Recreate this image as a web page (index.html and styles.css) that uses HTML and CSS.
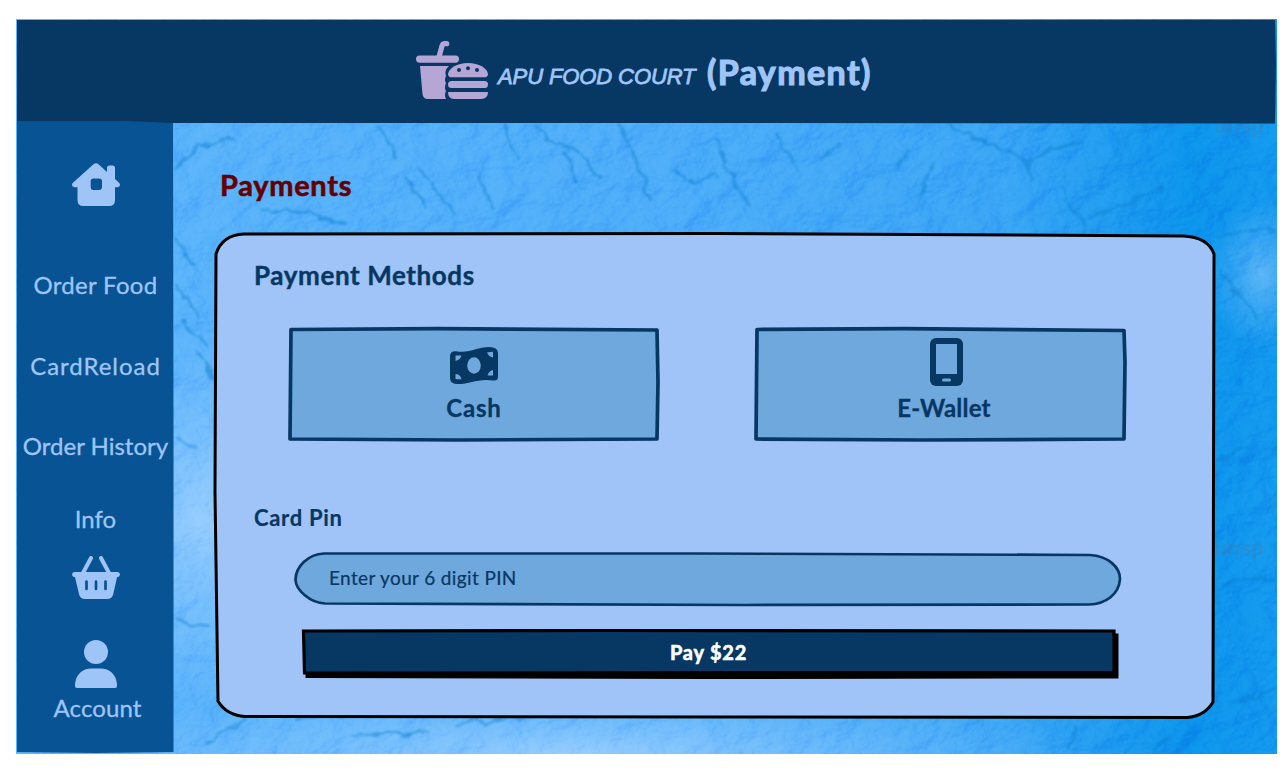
FILE: index.html
```html
<!DOCTYPE html>
<html lang="en">
<head>
<meta charset="utf-8">
<title>APU Food Court - Payment</title>
<link rel="stylesheet" href="styles.css">
</head>
<body>
<div class="app">
  <svg class="texture" viewBox="0 0 1261 735" aria-hidden="true">
    <defs>
      <linearGradient id="wash" x1="0" y1="0" x2="1" y2="0">
        <stop offset="0" stop-color="#5cb4fb"/><stop offset=".5" stop-color="#4bacf9"/>
        <stop offset=".78" stop-color="#38a4f5"/><stop offset=".93" stop-color="#0b93ec"/><stop offset="1" stop-color="#1297ee"/>
      </linearGradient>
      <radialGradient id="pale"><stop offset="0" stop-color="#a4d2ff" stop-opacity=".8"/><stop offset="1" stop-color="#8ac7ff" stop-opacity="0"/></radialGradient>
      <filter id="paper" x="0" y="0" width="100%" height="100%" color-interpolation-filters="sRGB">
        <feTurbulence type="fractalNoise" baseFrequency=".025 .03" numOctaves="6" seed="12" result="n"/>
        <feDiffuseLighting in="n" surfaceScale="8" diffuseConstant=".65" lighting-color="#ffffff"><feDistantLight azimuth="205" elevation="58"/></feDiffuseLighting>
      </filter>
      <filter id="rough"><feTurbulence type="fractalNoise" baseFrequency=".06" numOctaves="3" seed="4"/><feDisplacementMap in="SourceGraphic" scale="14" xChannelSelector="R" yChannelSelector="G"/><feGaussianBlur stdDeviation=".9"/></filter>
    </defs>
    <rect width="1261" height="735" fill="url(#wash)"/>
    <ellipse cx="190" cy="500" rx="170" ry="190" fill="url(#pale)"/>
    <ellipse cx="560" cy="735" rx="520" ry="70" fill="url(#pale)"/>
    <ellipse cx="1245" cy="255" rx="55" ry="75" fill="url(#pale)" opacity=".6"/>
    <rect class="grain" width="1261" height="735" filter="url(#paper)"/>
    <g class="creases" filter="url(#rough)">
      <path d="M160 150l22-22 40-9M245 190l42 3 43 12M360 107l18 17 3 18M388 155l25 35M405 150l33 46M462 152l13 38M487 105l15 38M520 110l20 16 18 5 26 27M548 132l15 35M600 105l22 38 12 40M655 150l25 13 22-9M700 120l18 45 15 22M760 116l20 35M800 145l22-21M880 150l10-17M905 180l5-22 12-18M930 105l54 25 26 10 5 20M1012 150l25-22 30-4M1045 170l15 25 12 12-10 18M1070 200l55-20 22-12M1200 215l60-4M1205 250l25 38M1215 270l28 29M160 220l18 26M158 265l25 35M165 300l25 28M178 330l30 42M160 420l18 10M158 600l32 10M190 725l42-28M280 700l65-7M335 716l75-4M440 705l78-9M1200 440l34-12M1205 565l54-8M1215 685l44-15M1140 730l15-14M1060 710l-5 22"/>
    </g>
    <text class="stamp" x="1198" y="114">unsp</text>
    <text class="stamp" x="1198" y="536">unsp</text>
  </svg>

  <header class="topbar">
    <svg class="shape" viewBox="0 0 1261 104" preserveAspectRatio="none" aria-hidden="true"><path d="M1 1H1259L1260 45L1259 104.500L700 104L1 104Z" fill="#073763"/></svg>
    <svg class="logo" viewBox="0 0 74 60" aria-hidden="true">
      <path d="M24 17L27 6Q27.500 3.700 30 3.700H31.700" fill="none" stroke="#b4a7d6" stroke-width="5.200" stroke-linecap="round"/>
      <rect x="1" y="15.500" width="43" height="7.200" rx="3.600" fill="#b4a7d6"/>
      <path d="M5 26H34Q30 29 30.500 34L31 36Q29 40 31 43Q29 48 31 51Q29 55 31 59H13Q8 59 7.500 54Z" fill="#b4a7d6"/>
      <path d="M36 37.300Q33 37 33 34C34 28 42 23 53 23S72 28 73 34Q73 37 70 37.300Z" fill="#b4a7d6"/>
      <g fill="#073763"><circle cx="44" cy="30" r="2"/><circle cx="53" cy="28.300" r="2"/><circle cx="62" cy="30" r="2"/></g>
      <rect x="33" y="41" width="40" height="7" rx="3.500" fill="#b4a7d6"/>
      <path d="M33 52H73Q73 59 66 59H39Q33 59 33 52Z" fill="#b4a7d6"/>
    </svg>
    <span class="brand">APU FOOD COURT</span>
    <h1 class="screen">(Payment)</h1>
  </header>

  <div class="body">
    <nav class="sidebar">
      <svg class="shape" viewBox="0 0 157 631" preserveAspectRatio="none" aria-hidden="true"><path d="M1 -2L110 -2L157 0L157.500 300L157.500 629L80 630L1 629Z" fill="#085394"/></svg>
      <svg class="icon home" viewBox="0 0 48 44" aria-label="Home">
        <path fill="#9fc5f8" fill-rule="evenodd" d="M21.500 1.300Q24-.8 26.500 1.300L35 9V5Q35 2.500 37.500 2.500H40.500Q43 2.500 43 5V16L47.300 20C48.800 22 47.500 24.200 45.500 24.200H43V37Q43 43 37 43H11.500Q5.500 43 5.500 37V24.200H2.700C.4 24.200-.7 21.800.7 20ZM21.500 15.500Q18.700 15.500 18.700 18.300V24Q18.700 27 21.500 27H27Q30 27 30 24V18.300Q30 15.500 27 15.500Z"/>
      </svg>
      <a class="link order">Order Food</a>
      <a class="link reload">CardReload</a>
      <a class="link history">Order History</a>
      <a class="link info">Info</a>
      <svg class="icon basket" viewBox="0 0 48 44" aria-label="Basket">
        <path d="M19 2L11 17M29 2L37 17" stroke="#9fc5f8" stroke-width="4" stroke-linecap="round"/>
        <path fill="#9fc5f8" d="M2.500 16H45.500Q48 16.300 48 18.700Q47.700 21 45 21.300L41.300 38Q40.200 43 35 43H13Q8 43 7 38L3 21.300Q.2 21 0 18.700Q0 16.300 2.500 16Z"/>
        <path d="M14.500 25.500V33M24 25.500V33M33.500 25.500V33" stroke="#085394" stroke-width="2.700" stroke-linecap="round"/>
      </svg>
      <svg class="icon person" viewBox="0 0 42 48" aria-label="Account">
        <circle cx="21" cy="12" r="12" fill="#9fc5f8"/><path fill="#9fc5f8" d="M2 48Q0 48 0 46V44C1 34 8 28.500 16 28.500H26C34 28.500 41 34 42 44V46Q42 48 40 48Z"/>
      </svg>
      <a class="link account">Account</a>
    </nav>

    <main class="main">
      <h2 class="title">Payments</h2>
      <section class="panel">
        <svg class="shape" viewBox="0 0 1002 487" aria-hidden="true"><path d="M2 22Q8 3 30 2L500 1.500L969 4Q994 5 1000 22L999 470Q991 484 973 485.500L520 485L31 484.500Q12 483 4 469L1 260Z" fill="#a0c4f8" stroke="#000" stroke-width="3"/></svg>
        <h3 class="subtitle">Payment Methods</h3>
        <div class="methods">
          <button class="method cash">
            <svg class="shape" viewBox="0 0 372 114" aria-hidden="true"><path d="M3 2.500L150 1.700L369 3L370 55L369 112L170 113L2 112Z" fill="#6fa8dc" stroke="#073763" stroke-width="3.700" stroke-linejoin="round"/></svg>
            <svg class="glyph" viewBox="0 0 48 48" aria-hidden="true">
              <path fill="#073763" d="M0 14Q0 9 6 9.200C20 11.500 27 5 39 5Q48 5 48 11V35Q48 39 43 38.500C29 36 20 42 8 42Q0 42 0 36Z"/>
              <ellipse cx="24" cy="23.500" rx="6.800" ry="8.200" fill="#6fa8dc"/>
              <path fill="#6fa8dc" d="M5.500 13.500H11.500Q10 18 5.500 19ZM37 10.500Q40 9.700 43 9.700V15.500Q39 15 37 10.500ZM43 28V33.500H37.500Q39 28.500 43 28ZM5.500 32Q10 32 11.500 37Q8 37.500 5.500 37Z"/>
            </svg>
            <span class="name">Cash</span>
          </button>
          <button class="method wallet">
            <svg class="shape" viewBox="0 0 372 114" aria-hidden="true"><path d="M3 2.500L150 1.700L370 3.500L371 35L370 112L170 113L2 112Z" fill="#6fa8dc" stroke="#073763" stroke-width="3.700" stroke-linejoin="round"/></svg>
            <svg class="glyph" viewBox="0 0 48 48" aria-hidden="true">
              <rect x="8" width="33" height="48" rx="6" fill="#073763"/><rect x="14" y="6" width="21" height="30" fill="#6fa8dc"/><rect x="20" y="40.500" width="9" height="3" rx="1.500" fill="#6fa8dc"/>
            </svg>
            <span class="name">E-Wallet</span>
          </button>
        </div>
        <label class="label">Card Pin</label>
        <div class="pin">
          <svg class="shape" viewBox="0 0 828 54" aria-hidden="true"><path d="M30 1.500L400 1.500L796 3C814 4 826 15 826 27C825 42 812 52 795 52.500L450 53L31 51.500C16 51 2 38 1.500 28C1.500 15 14 2 30 1.500Z" fill="#6fa8dc" stroke="#073763" stroke-width="2.700"/></svg>
          <span class="hint">Enter your 6 digit PIN</span>
        </div>
        <button class="pay">
          <svg class="shape" viewBox="0 0 813 46" aria-hidden="true">
            <path d="M1 2L811 2L811 44L400 44.500L1 43.500Z" transform="translate(4 4)" stroke="#000" stroke-width="3"/>
            <path d="M1.500 2L300 1.500L812 2L812 43.500L2.500 44Z" fill="#073763" stroke="#000" stroke-width="3.200"/>
          </svg>
          <span class="amount">Pay $22</span>
        </button>
      </section>
    </main>
  </div>
</div>
</body>
</html>
```
FILE: styles.css
```css
* { box-sizing: border-box; }
body { margin: 0; padding: 19px 0 0 16px; height: 775px; overflow: hidden; background: #fff; font-family: Lato, "Open Sans", sans-serif; }
h1, h2, h3 { margin: 0; }
button { border: 0; padding: 0; background: none; font: inherit; }
.app { position: relative; isolation: isolate; width: 1261px; height: 735px; overflow: hidden; }
.texture { position: absolute; inset: 0; z-index: -1; width: 1261px; height: 735px; }
.grain { mix-blend-mode: soft-light; opacity: .42; }
.creases { fill: none; stroke: #087ccd; stroke-width: 2.4; opacity: .5; }
.stamp { font: bold 21px "Liberation Sans", sans-serif; fill: #477fa8; opacity: .35; }
.shape { position: absolute; inset: 0; z-index: -1; width: 100%; height: 100%; overflow: visible; }
.topbar, .sidebar, .panel, .method, .pin, .pay { position: relative; isolation: isolate; }

.topbar { display: flex; height: 104px; padding-left: 399px; color: #9fc5f8; }
.logo { width: 74px; height: 60px; margin-top: 21px; flex: none; }
.brand { margin: 44px 0 0 9px; width: 209px; font: italic 22px/28px "Liberation Sans", sans-serif; letter-spacing: -.1px; -webkit-text-stroke: .8px; white-space: nowrap; }
.screen { margin-top: 33px; font-size: 34px; line-height: 40px; font-weight: 700; letter-spacing: 1.4px; -webkit-text-stroke: 1.2px; white-space: nowrap; }

.body { display: flex; height: 631px; }
.sidebar { display: flex; flex-direction: column; align-items: center; width: 157px; padding: 40px 0 0 2px; color: #9fc5f8; }
.icon { flex: none; width: 48px; height: 44px; }
.link { font-size: 24px; line-height: 32px; white-space: nowrap; -webkit-text-stroke: .3px; }
.order { margin-top: 62px; letter-spacing: .3px; }
.reload { margin-top: 49px; letter-spacing: .95px; }
.history { margin-top: 48px; }
.info { margin-top: 41px; }
.basket { margin-top: 21px; }
.person { width: 42px; height: 48px; margin-top: 40px; }
.account { margin-top: 4px; padding-left: 4px; letter-spacing: .1px; }

.main { flex: 1; padding: 44px 0 0 41px; }
.title { padding-left: 6px; height: 65px; color: #600; font-size: 29px; line-height: 36px; letter-spacing: .7px; -webkit-text-stroke: .6px; }
.panel { display: flex; flex-direction: column; align-items: flex-start; width: 1002px; height: 487px; padding: 26px 0 0 40px; color: #073763; }
.subtitle { font-size: 26px; line-height: 34px; letter-spacing: .6px; -webkit-text-stroke: .4px; }
.methods { display: flex; gap: 94px; margin: 35px 0 0 34px; }
.method { display: flex; flex-direction: column; align-items: center; width: 372px; height: 114px; padding: 11px 0 0; color: #073763; }
.glyph { width: 48px; height: 48px; }
.name { margin-top: 7px; font-size: 24px; line-height: 30px; font-weight: 700; -webkit-text-stroke: .3px; }
.cash .glyph { margin-top: 4px; }
.cash .name { margin-top: 3px; letter-spacing: .8px; }
.wallet .glyph { margin-left: 11px; }
.wallet .name { margin-left: 8px; letter-spacing: .2px; }
.label { margin-top: 62px; font-size: 22px; line-height: 30px; font-weight: 700; letter-spacing: .7px; -webkit-text-stroke: .2px; }
.pin { width: 828px; height: 54px; margin: 19px 0 0 40px; padding: 12px 0 0 35px; }
.hint { font-size: 19px; line-height: 28px; letter-spacing: .37px; -webkit-text-stroke: .2px; }
.pay { width: 813px; height: 46px; margin: 23px 0 0 48px; color: #fff; font-size: 20px; line-height: 46px; font-weight: 700; letter-spacing: .8px; -webkit-text-stroke: .6px; }
```
